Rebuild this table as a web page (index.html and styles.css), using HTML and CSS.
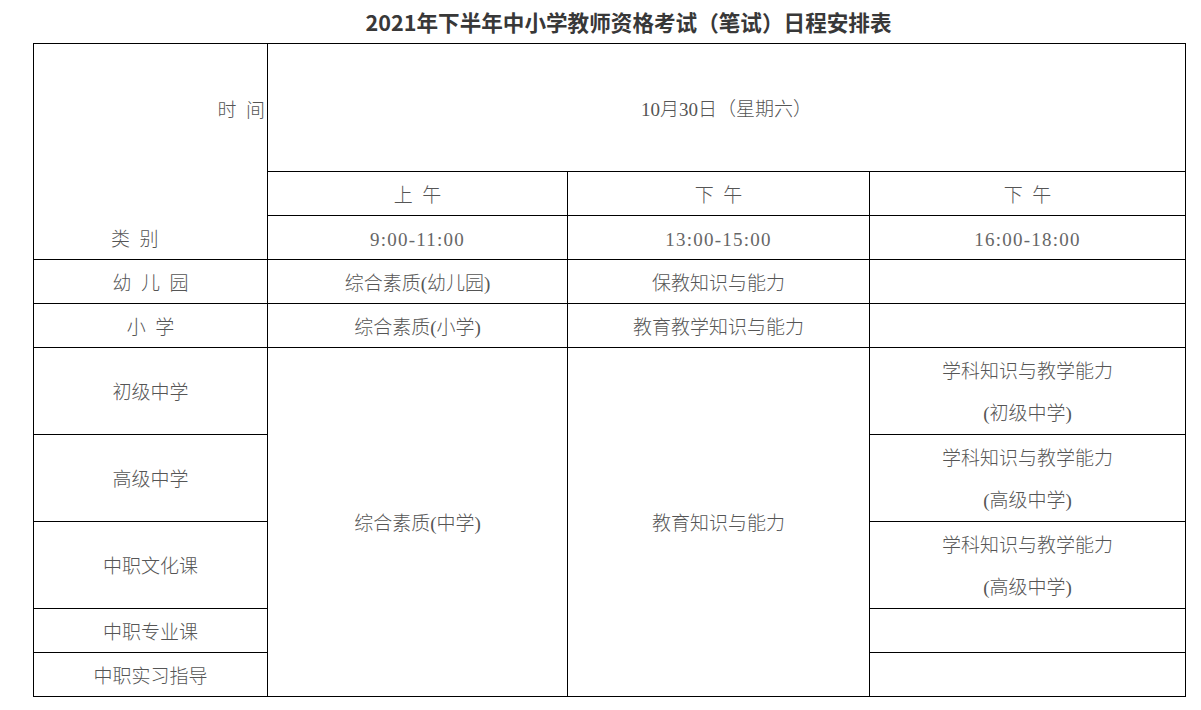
FILE: index.html
```html
<!DOCTYPE html>
<html lang="zh-CN">
<head>
<meta charset="utf-8">
<title>2021年下半年中小学教师资格考试（笔试）日程安排表</title>
<link rel="stylesheet" href="styles.css">
</head>
<body>
<h1 class="title">2021年下半年中小学教师资格考试（笔试）日程安排表</h1>
<table class="schedule">
  <colgroup>
    <col class="c-cat">
    <col class="c-am">
    <col class="c-pm1">
    <col class="c-pm2">
  </colgroup>
  <tr class="r-date">
    <td rowspan="3" class="corner">
      <div class="corner-time">时&nbsp;&nbsp;间</div>
      <div class="corner-gap"></div>
      <div class="corner-cat">类&nbsp;&nbsp;别</div>
    </td>
    <td colspan="3">10月30日（星期六）</td>
  </tr>
  <tr class="r-one">
    <td>上&nbsp;&nbsp;午</td>
    <td>下&nbsp;&nbsp;午</td>
    <td>下&nbsp;&nbsp;午</td>
  </tr>
  <tr class="r-one">
    <td><span class="num">9:00-11:00</span></td>
    <td><span class="num">13:00-15:00</span></td>
    <td><span class="num">16:00-18:00</span></td>
  </tr>
  <tr class="r-one">
    <td>幼&nbsp;&nbsp;儿&nbsp;&nbsp;园</td>
    <td>综合素质(幼儿园)</td>
    <td>保教知识与能力</td>
    <td></td>
  </tr>
  <tr class="r-one">
    <td>小&nbsp;&nbsp;学</td>
    <td>综合素质(小学)</td>
    <td>教育教学知识与能力</td>
    <td></td>
  </tr>
  <tr class="r-two">
    <td>初级中学</td>
    <td rowspan="5" class="tall">综合素质(中学)</td>
    <td rowspan="5" class="tall">教育知识与能力</td>
    <td>学科知识与教学能力<br>(初级中学)</td>
  </tr>
  <tr class="r-two">
    <td>高级中学</td>
    <td>学科知识与教学能力<br>(高级中学)</td>
  </tr>
  <tr class="r-two">
    <td>中职文化课</td>
    <td>学科知识与教学能力<br>(高级中学)</td>
  </tr>
  <tr class="r-one">
    <td>中职专业课</td>
    <td></td>
  </tr>
  <tr class="r-one">
    <td>中职实习指导</td>
    <td></td>
  </tr>
</table>
</body>
</html>
```

FILE: styles.css
```css
html, body {
  margin: 0;
  padding: 0;
  background: #ffffff;
}

body {
  font-family: "Liberation Serif", "Noto Sans CJK SC", serif;
  color: #555555;
}

.title {
  margin: 0;
  height: 43px;
  line-height: 44px;
  padding-left: 56px;
  text-align: center;
  font-family: "Noto Sans CJK SC", "Noto Sans", sans-serif;
  font-weight: 700;
  font-size: 21.6px;
  color: #383838;
}

.schedule {
  margin-left: 33px;
  width: 1152px;
  table-layout: fixed;
  border-collapse: collapse;
  font-size: 19px;
  font-weight: 300;
}

.c-cat { width: 234px; }
.c-am { width: 300px; }
.c-pm1 { width: 302px; }
.c-pm2 { width: 316px; }

.schedule td {
  border: 1px solid #000000;
  padding: 0;
  text-align: center;
  vertical-align: middle;
  white-space: nowrap;
}

.r-date td {
  height: 124px;
  padding-top: 3px;
  line-height: 43px;
}

.r-one td {
  height: 38px;
  padding-top: 5px;
  line-height: 38px;
}

.r-two td {
  height: 83px;
  padding-top: 3px;
  line-height: 41.5px;
}

.schedule td.tall {
  padding-top: 3px;
  line-height: 43px;
}

.num {
  letter-spacing: 1.25px;
  color: #666666;
}

.schedule td.corner {
  vertical-align: top;
  text-align: left;
  padding-top: 0;
  line-height: normal;
}

.corner-time {
  height: 128px;
  line-height: 134px;
  text-align: right;
  padding-right: 2px;
}

.corner-gap {
  height: 44px;
}

.corner-cat {
  height: 43px;
  line-height: 48px;
  padding-left: 77px;
}
```
